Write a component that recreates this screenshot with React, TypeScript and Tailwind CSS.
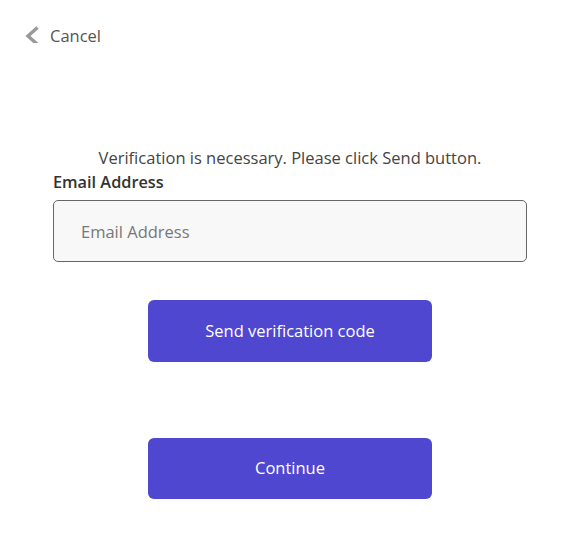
export default function App() {
  return (
    <div className="min-h-[550px] w-[585px] bg-white font-['Open_Sans',sans-serif] text-[#333]">
      {/* top bar, text is clipped at the bottom like in the original */}
      <div className="flex h-[43px] items-start overflow-hidden pl-[24px] pt-[24px]">
        <button className="flex items-start text-[16.5px] leading-[24px] text-[#555]">
          <svg width="16" height="20" viewBox="0 0 16 20" className="mt-[2px]">
            <path d="M13.5 1.5 L4 10 L13.5 18.5" fill="none" stroke="#999" strokeWidth="3.4" />
          </svg>
          <span className="ml-[10px]">Cancel</span>
        </button>
      </div>

      <div className="ml-[53px] w-[474px] pt-[103px]">
        <p className="text-center text-[16.5px] leading-[24px] text-[#444]">
          Verification is necessary. Please click Send button.
        </p>
        <label className="mt-[1px] block text-[16.3px] font-semibold leading-[22px] text-[#333]">
          Email Address
        </label>
        <input
          type="email"
          placeholder="Email Address"
          className="mt-[7px] h-[62px] w-full rounded-[5px] border border-[#666] bg-[#f8f8f8] px-[27px] text-[16.5px] text-[#333] placeholder:text-[#777] focus:outline-none"
        />
        <div className="mt-[38px] flex flex-col items-center gap-[76px]">
          <button className="h-[62px] w-[284px] rounded-[6px] bg-[#4f47d0] text-[16.5px] text-white">
            Send verification code
          </button>
          <button className="h-[61px] w-[284px] rounded-[6px] bg-[#4f47d0] text-[16.5px] text-white">
            Continue
          </button>
        </div>
      </div>
    </div>
  );
}
